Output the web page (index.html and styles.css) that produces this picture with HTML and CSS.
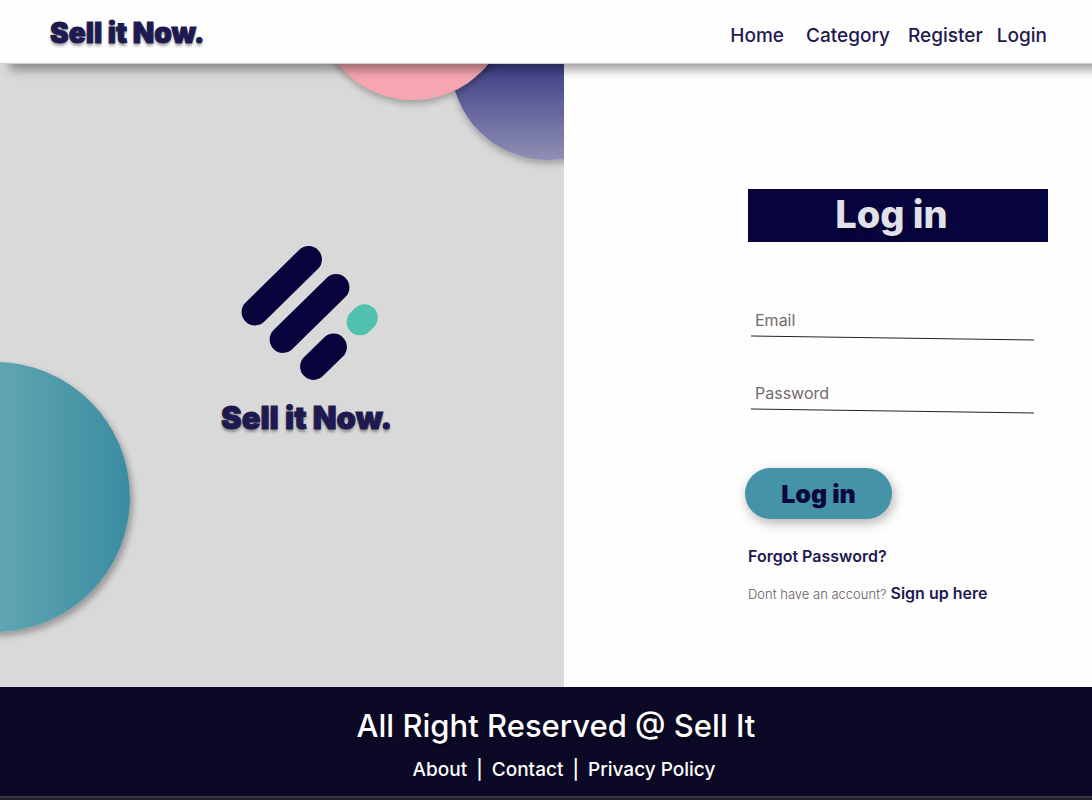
FILE: index.html
```html
<!DOCTYPE html>
<html lang="en">
<head>
<meta charset="utf-8">
<meta name="viewport" content="width=device-width, initial-scale=1">
<title>Sell it Now. Log in</title>
<link rel="stylesheet" href="styles.css">
</head>
<body>
<header class="header">
  <a class="wordmark" href="#">Sell it Now.</a>
  <nav class="nav">
    <a class="nav-home" href="#">Home</a>
    <a class="nav-category" href="#">Category</a>
    <a class="nav-register" href="#">Register</a>
    <a href="#">Login</a>
  </nav>
</header>
<main class="main">
  <section class="showcase">
    <div class="circle circle-purple"></div>
    <div class="circle circle-pink"></div>
    <div class="circle circle-teal"></div>
    <div class="brand">
      <svg class="logo" viewBox="0 0 138 136" width="138" height="136" aria-hidden="true">
        <g stroke="#06033d" stroke-width="26.8" stroke-linecap="round">
          <path d="M14 67 67.500 14.500"/>
          <path d="M42 94.500 95 42.500"/>
          <path d="M72.500 121.500 92.500 102"/>
        </g>
        <path d="M119 77 123.500 72.500" stroke="#51c1af" stroke-width="26.600" stroke-linecap="round"/>
      </svg>
      <p class="wordmark wordmark-large">Sell it Now.</p>
    </div>
  </section>
  <section class="panel">
    <form class="form">
      <h1 class="title">Log in</h1>
      <div class="field">
        <input type="email" placeholder="Email" aria-label="Email">
        <svg class="rule" viewBox="0 0 283 6" preserveAspectRatio="none" aria-hidden="true"><path d="M0 1 283 5"/></svg>
      </div>
      <div class="field">
        <input type="password" placeholder="Password" aria-label="Password">
        <svg class="rule" viewBox="0 0 283 6" preserveAspectRatio="none" aria-hidden="true"><path d="M0 1 283 5"/></svg>
      </div>
      <button class="submit" type="button">Log in</button>
      <a class="link" href="#">Forgot Password?</a>
      <p class="signup"><span>Dont have an account?</span><a class="link" href="#">Sign up here</a></p>
    </form>
  </section>
</main>
<footer class="footer">
  <p class="rights">All Right Reserved @ Sell It</p>
  <nav class="footer-nav">
    <a href="#">About</a><span class="bar">|</span><a href="#">Contact</a><span class="bar">|</span><a href="#">Privacy Policy</a>
  </nav>
</footer>
</body>
</html>
```
FILE: styles.css
```css
* { box-sizing: border-box; }
body {
  margin: 0;
  min-height: 100vh;
  display: flex;
  flex-direction: column;
  overflow-x: hidden;
  background: #fefefe;
  color: #1e1a4f;
  font-family: Inter, "Liberation Sans", sans-serif;
}
a { color: inherit; text-decoration: none; }
p, h1 { margin: 0; }

.header {
  position: relative;
  z-index: 2;
  display: flex;
  align-items: center;
  justify-content: space-between;
  height: 64px;
  padding: 2px 45px 0 50px;
  background: #fefefe;
  border-bottom: 1px solid #cfcfcf;
  box-shadow: 10px 6px 9px rgba(0, 0, 0, 0.36);
}
.wordmark {
  font-size: 28px;
  line-height: 36px;
  font-weight: 900;
  color: #1e1a4f;
  -webkit-text-stroke: 1px #1e1a4f;
  text-shadow: 0 3px 3px rgba(0, 0, 0, 0.35);
}
.wordmark-large { font-size: 31px; line-height: 40px; }
.nav {
  display: flex;
  padding-top: 6px;
  font-size: 19px;
  line-height: 24px;
  font-weight: 500;
}
.nav-home { margin-right: 22px; }
.nav-category { margin-right: 18px; }
.nav-register { margin-right: 14px; }

.main {
  flex: 1;
  display: grid;
  grid-template-columns: 31fr 29fr;
}
.showcase {
  position: relative;
  overflow: hidden;
  padding: 181px 0 0 221px;
  background: #d9d9d9;
}
.circle {
  position: absolute;
  border-radius: 50%;
  box-shadow: 3px 4px 6px rgba(0, 0, 0, 0.3);
}
.circle-purple {
  top: -98px;
  right: -81px;
  width: 194px;
  height: 194px;
  background: linear-gradient(#1c1464 30%, #44448a 54%, #8f8fb5);
  box-shadow: 0 4px 6px rgba(0, 0, 0, 0.25);
}
.circle-pink {
  top: -158px;
  right: 54px;
  width: 194px;
  height: 194px;
  background: #f5a6b0;
  box-shadow: 0 4px 6px rgba(0, 0, 0, 0.25);
}
.circle-teal {
  top: 298px;
  left: -140px;
  width: 270px;
  height: 270px;
  background: linear-gradient(to right, #80bfc0, #60a5b1 52%, #3a8ca1);
}
.brand { position: relative; }
.logo { display: block; margin: 0 0 17px 20px; fill: none; }

.panel {
  display: flex;
  justify-content: flex-end;
  padding: 125px 44px 80px 20px;
}
.form {
  display: flex;
  flex-direction: column;
  align-items: flex-start;
  width: 300px;
}
.title {
  align-self: stretch;
  padding: 0 13px 3px 0;
  background: #06033d;
  color: #e1e1e9;
  font-size: 38px;
  line-height: 50px;
  font-weight: 800;
  text-align: center;
  text-shadow: 0 3px 3px rgba(0, 0, 0, 0.3);
}
.field { width: 283px; margin: 0 0 37px 3px; }
.title + .field { margin-top: 63px; }
.field input {
  display: block;
  width: 100%;
  height: 30px;
  padding: 0 4px;
  border: 0;
  outline: 0;
  background: none;
  color: #1e1a4f;
  font: 400 16px/30px Inter, "Liberation Sans", sans-serif;
}
.field input::placeholder { color: #736b6b; opacity: 1; }
.rule { display: block; width: 100%; height: 6px; }
.rule path { stroke: #222; stroke-width: 1; fill: none; }
.submit {
  width: 147px;
  height: 51px;
  margin: 17px 0 25px -3px;
  padding: 2px 0 0;
  border: 0;
  border-radius: 26px;
  background: #4593a7;
  color: #0b0840;
  font: 900 25px/49px Inter, "Liberation Sans", sans-serif;
  box-shadow: 2px 4px 12px rgba(0, 0, 0, 0.3);
}
.link { font-size: 16px; line-height: 24px; font-weight: 600; }
.signup {
  display: flex;
  align-items: baseline;
  gap: 4px;
  margin-top: 13px;
  font-size: 13px;
  font-weight: 300;
  color: #655b5b;
}
.signup .link { color: #1e1a4f; }

.footer {
  display: flex;
  flex-direction: column;
  align-items: center;
  height: 113px;
  padding: 19px 0 0 20px;
  background: linear-gradient(#0b0926 109px, #383644 109px, #383644 111px, #231f20 111px);
  color: #fefefe;
}
.rights {
  font-size: 31px;
  line-height: 40px;
  font-weight: 500;
  text-shadow: 0 3px 3px rgba(0, 0, 0, 0.4);
}
.footer-nav {
  display: flex;
  gap: 9px;
  padding: 12px 0 0 16px;
  font-size: 19px;
  line-height: 24px;
  font-weight: 500;
}
```
